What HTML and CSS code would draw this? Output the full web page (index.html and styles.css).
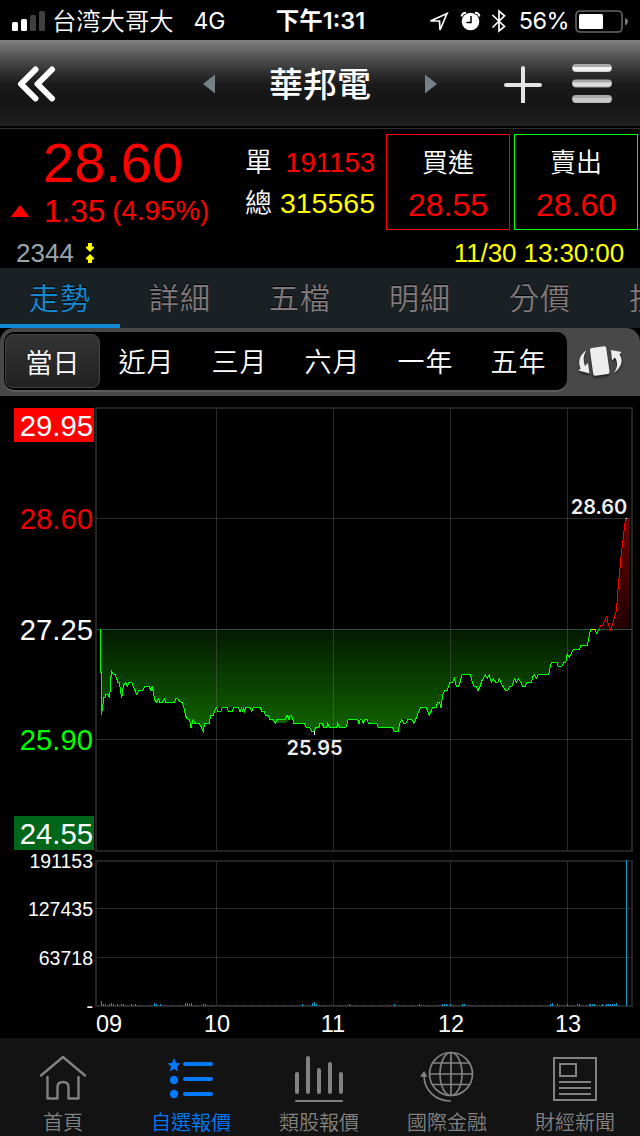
FILE: index.html
```html
<!DOCTYPE html>
<html lang="zh-Hant">
<head>
    <meta charset="UTF-8">
    <meta name="viewport" content="width=device-width, initial-scale=1.0">
    <title>華邦電</title>
    <link rel="stylesheet" href="styles.css">
</head>
<body>
    <div class="status-bar">
        <div class="carrier">
            <svg width="34" height="22" viewBox="0 0 34 22">
                <rect x="0" y="12" width="6" height="9" rx="1.5" fill="#fff"/>
                <rect x="9" y="9" width="6" height="12" rx="1.5" fill="#fff"/>
                <rect x="18" y="5" width="6" height="16" rx="1.5" fill="#404040"/>
                <rect x="27" y="1" width="6" height="20" rx="1.5" fill="#404040"/>
            </svg>
            <span class="carrier-name">台湾大哥大</span>
            <span class="network">4G</span>
        </div>
        <div class="clock">下午1:31</div>
        <div class="indicators">
            <svg width="88" height="26" viewBox="430 7 88 26">
                <path d="M449 12.5L432.500 20H441.500L442 29Z" fill="none" stroke="#fff" stroke-width="1.7" stroke-linejoin="miter"/>
                <circle cx="472.500" cy="20.500" r="8.800" fill="#fff"/>
                <path d="M463.500 15.500Q464 12 468 11.800M481.500 15.500Q481 12 477 11.800" fill="none" stroke="#fff" stroke-width="2"/>
                <path d="M473 15V21.500H468.500" fill="none" stroke="#000" stroke-width="1.500"/>
                <path d="M494.500 14L506.500 25.500L501 30V10L506.500 14.800L494.500 26.500" fill="none" stroke="#fff" stroke-width="1.700"/>
            </svg>
            <span class="battery-text">56%</span>
            <svg width="54" height="24" viewBox="0 0 54 24">
                <rect x="1" y="2" width="46" height="21" rx="4" fill="none" stroke="#666" stroke-width="1.600"/>
                <rect x="4" y="5" width="24" height="15" rx="1.500" fill="#fff"/>
                <path d="M50 9Q53 10 53 12.500T50 16.500Z" fill="#777"/>
            </svg>
        </div>
    </div>

    <div class="nav-bar">
        <svg class="nav-back" width="40" height="40" viewBox="0 0 40 40">
            <path d="M18.500 5.500L4 20L18.500 34.500M35 5.500L20.500 20L35 34.500" fill="none" stroke="#fff" stroke-width="6" stroke-linecap="round" stroke-linejoin="round"/>
        </svg>
        <div class="stock-switch">
            <svg width="12" height="20" viewBox="0 0 12 20"><path d="M12 0.500V19.500L0 10Z" fill="#768087"/></svg>
            <h1>華邦電</h1>
            <svg width="12" height="20" viewBox="0 0 12 20"><path d="M0 0.500V19.500L12 10Z" fill="#768087"/></svg>
        </div>
        <svg class="nav-add" width="38" height="38" viewBox="0 0 38 38">
            <path d="M19 3V37M2 20H36" stroke="#e4e4e4" stroke-width="4" stroke-linecap="round"/>
        </svg>
        <svg class="nav-menu" width="40" height="40" viewBox="0 0 40 40">
            <g fill="#aaa">
                <rect y="0" width="40" height="8" rx="4"/>
                <rect y="15.500" width="40" height="8" rx="4"/>
                <rect y="31" width="40" height="8" rx="4"/>
            </g>
            <path d="M0.500 3H39.500Q39 7.500 36 7.500H4Q1 7.500 .5 3Z" fill="#f2f2f2"/>
            <path d="M0.500 18.500H39.500Q39 22.500 36 22.500H4Q1 22.500 .5 18.500Z" fill="#dedede"/>
            <path d="M0.500 34H39.500Q39 38.500 36 38.500H4Q1 38.500 .5 34Z" fill="#c8c8c8"/>
        </svg>
    </div>

    <div class="quote">
        <div class="quote-main">
            <div class="price">28.60</div>
            <div class="change">
                <svg width="20" height="12" viewBox="0 0 20 12"><path d="M10 0L19.500 12H.5Z" fill="#f00"/></svg>
                <span class="change-value">1.35</span>
                <span class="change-percent">(4.95%)</span>
            </div>
        </div>
        <dl class="volume">
            <dt>單</dt>
            <dd class="single">191153</dd>
            <dt>總</dt>
            <dd class="total">315565</dd>
        </dl>
        <div class="order buy">
            <span class="order-name">買進</span>
            <span class="order-price">28.55</span>
        </div>
        <div class="order sell">
            <span class="order-name">賣出</span>
            <span class="order-price">28.60</span>
        </div>
    </div>
    <div class="quote-info">
        <span class="code">2344</span>
        <svg width="10" height="20" viewBox="0 0 10 20">
            <path d="M3 0H7V3.500H9V5L5 9L1 5V3.500H3ZM3 20H7V16.500H9V15L5 11L1 15V16.500H3Z" fill="#ff0"/>
        </svg>
        <span class="quote-time">11/30 13:30:00</span>
    </div>

    <div class="tabs">
        <div class="tab active">走勢</div>
        <div class="tab">詳細</div>
        <div class="tab">五檔</div>
        <div class="tab">明細</div>
        <div class="tab">分價</div>
        <div class="tab">技術</div>
    </div>

    <div class="range-bar">
        <div class="ranges">
            <div class="range selected">當日</div>
            <div class="range">近月</div>
            <div class="range">三月</div>
            <div class="range">六月</div>
            <div class="range">一年</div>
            <div class="range">五年</div>
        </div>
        <svg class="rotate" width="46" height="34" viewBox="0 0 46 34">
            <g fill="#ededed">
                <rect x="14.500" y="3" width="16.500" height="28" rx="2" transform="rotate(-8 22.500 17)"/>
                <path d="M9.500 6.500C3 10 0.500 18 3.500 24.500L1.500 26.500L12.500 29.500L11 19L8 22C6 17 6 11 9.500 6.500Z"/>
                <path d="M36.500 29C44.500 24 46.500 16 42.500 10.500L44.500 8L34 6L35 16.500L38 13.500C41 18 41 24 36.500 29Z"/>
            </g>
        </svg>
    </div>

    <svg class="chart" width="640" height="642" viewBox="0 396 640 642">
        <defs>
            <linearGradient id="down" gradientUnits="userSpaceOnUse" x1="0" y1="629" x2="0" y2="735">
                <stop offset="0" stop-color="#031a00"/>
                <stop offset="1" stop-color="#116600"/>
            </linearGradient>
            <linearGradient id="up" gradientUnits="userSpaceOnUse" x1="0" y1="518" x2="0" y2="629">
                <stop offset="0" stop-color="#6c0000"/>
                <stop offset="1" stop-color="#200000"/>
            </linearGradient>
        </defs>

        <g class="area">
            <path fill="url(#down)" d="M100 629V672L101.300 673V715L103.700 698L106 694L109.300 698L111.300 671L115.300 675L118 682L119.700 683L121.700 698L123.700 685L125.700 682L127.300 686L129 682H131.700L136.700 694.500L138.700 690H142.700L144.700 686.500H149L151 690L152.300 686.500L154.700 700L156.700 702.500H174.300L177 698.500L182 702.500L185.300 715L187 718.500L189.700 720L191.300 727L193.300 719.500L195 723.500H199L203.300 731.500L204.700 723.500H209.300L210.700 715.500L213.300 715L216.700 707.500H260L265.700 715L270 719.500L275.300 723H285.300L290 719.500H292L294 723.500H304.300L306.300 727.500H311.700L313.700 731.500L318 727L320 723.500L324 727.500H346L348 720L349.300 719.500H368L370 723H376.700L378.300 727.500H392.300L394.300 731.500H398.300L401.700 719.500H411.700L413.700 723L421 707.500H426L429.300 715.500L432.700 707.500L436 707L438 702.500L441 707.500L442.700 694.500L444.700 690.500L447 690L450 682.500L454.300 678.500L456.300 686.500L458.300 686L462.300 674.500H470.300L474.300 686.500L478 690.500L485.300 674.500L489.300 675L491.300 682.500L499.300 678.500L505.700 690.500L511.700 686L514.700 678.500L518.300 678.500L523 686.500L531.300 682.500L534.300 674.500H548.700L551.300 662.500H556.700L558.300 666.500L565.700 662L567.300 654L573.300 649.500H579.300L581 645.500H587.300L590.300 629Z"/>
            <path fill="url(#up)" d="M599 629L602 625L606.700 616L610.300 629L614.300 617L616.300 610L625.500 518H629V629Z"/>
        </g>

        <g class="grid">
            <path d="M216.500 408V851M333.500 408V851M450.500 408V851M567.500 408V851"/>
            <path d="M216.500 861V1006M333.500 861V1006M450.500 861V1006M567.500 861V1006"/>
            <path d="M97 518.500H631M97 739.500H631M97 908.500H631M97 957.500H631"/>
        </g>
        <g class="frame">
            <rect x="96" y="408" width="536" height="443"/>
            <rect x="96" y="861" width="536" height="145"/>
        </g>
        <path class="baseline" d="M96 629.500H632"/>

        <g class="line">
            <path class="down" d="M100.500 629V672L101.500 673V715L102.700 706L103.700 698L105.300 696.500L106 694.500H108L109.300 698L110.300 690L111.300 671L113.300 674.500H115.300L118 682.500H119.500L120.300 690L121.700 698L122.700 690L123.700 685L125.700 682.500L127.300 686.500L129 682.500H131.700L133.300 686.500L136.700 694.500L138.700 690.500H142.700L144.700 686.500H149L151 690.500L152.300 686.500L154.700 700L156.700 702.500L158.300 698.500L160 702.500H162.300L164.300 698.500L166 702.500H174.300L176 698.500H177.700L179.300 701L182 702.500L184 707.500L185.300 715L187 718.500L189.700 720L190.700 727H191.300L193.300 719.500L195 723.500H199L201 727L203.300 731.500L204.700 723.500H209.300L210.700 715.500H213.300L215 710L216.700 707.500L217.700 711.500H220.700L222.300 707.500H227L228.700 711.500H232L233.700 707.500H238.300L240 711.500L241.700 707.500L242.700 711.500L243.500 707.500L244.500 711.500L245.700 707.500H250L251.700 711.500L253.300 707.500H260L262 711.500H264L265.700 715.500H268.300L270 719.500H273.300L275.300 723.500L277 719.500H285.300L286.700 715.500H287.700L289 719.500L290.300 715.500H291.700L294 723.500H304.300L306.300 727.500H309.700L311.700 731.500H313.700L315.700 727.500H318.700L320 723.500H322.300L323.700 727.500H326.700L327.700 723.500L329.300 727.500H336.700L337.700 723.500L339.300 727.500H346L348 720L349.300 719.500H357.700L359 723.500L360.300 719.500H361.700L363.300 723.500L364.700 719.500H367L368.700 723.500H376.700L378.300 727.500H392.300L394.300 731.500H398.300L399.700 723.500L401.700 719.500L403.700 723.500H405.700L407.700 719.500H411.700L413.700 723.500L416 718.500L418.300 712L421 707.500H426L429.300 715.500L432.700 707.500H436L437.700 702.500H439.700L441 707.500L442.700 694.500L444.700 690.500H447L450 682.500H452.500L454.300 678.500L456.300 686.500H458.300L460 682.500L461.300 677L462.300 674.500H470.300L472.300 682.500L474.300 686.500H476.300L478 690.500L480 686.500L482 680.500L485.300 674.500L487.300 678.500L489.300 675L491.300 682.500L493.300 678.500L495.700 682.500H497.700L499.300 678.500L501.700 684.500L505.700 690.500H507.700L509.700 686.500H511.700L514.700 678.500L516.300 682.500L518.300 678.500L520.700 682.500L523 686.500H525L526.700 682.500H531.300L533 676.500L534.300 674.500L536.300 678.500L538.300 674.500H548.700L551.300 662.500H556.700L558.300 666.500H561.700L563.700 662.500H565.700L567.300 654L569.300 657.500L573.300 649.500H579.300L581 645.500H587.300L590.500 629.500M595 629.500L596.700 633.500L599 629.500"/>
            <path class="flat" d="M590.500 629.500H595"/>
            <path class="up" d="M599 629.500L600.700 625.500H602.700L604.700 620.500L606.700 616.500L608.300 624L610.500 629.500L612.300 625.500L614.300 617.500L616.500 610L618.500 584L621 557L625.500 518.500"/>
        </g>
        <path class="marker" d="M314.500 731V735M626 518.500H627"/>

        <path class="volume-floor" d="M101 1005.500H620"/>
        <g id="volumeBars" class="volume-bars"></g>

        <rect x="14" y="408" width="80" height="34" fill="#f00"/>
        <rect x="14" y="816" width="80" height="34" fill="#00661a"/>
        <g class="price-axis">
            <text x="93" y="436" fill="#fff">29.95</text>
            <text x="93" y="529" fill="#e00">28.60</text>
            <text x="93" y="640" fill="#fff">27.25</text>
            <text x="93" y="750" fill="#0f0">25.90</text>
            <text x="93" y="844" fill="#fff">24.55</text>
        </g>
        <g class="volume-axis">
            <text x="93" y="868">191153</text>
            <text x="93" y="916">127435</text>
            <text x="93" y="965">63718</text>
            <text x="93" y="1013">-</text>
        </g>
        <g class="time-axis">
            <text x="109" y="1032">09</text>
            <text x="217" y="1032">10</text>
            <text x="333" y="1032">11</text>
            <text x="451" y="1032">12</text>
            <text x="568" y="1032">13</text>
        </g>
        <g class="extremes">
            <text x="314.500" y="755">25.95</text>
            <text x="599" y="514">28.60</text>
        </g>
    </svg>

    <div class="tab-bar">
        <div class="item">
            <svg width="48" height="48" viewBox="0 0 48 48" fill="none" stroke="currentColor" stroke-width="2.400" stroke-linecap="round" stroke-linejoin="round">
                <path d="M2 21.500L24 3L46 21.500M8.500 23V44.500H18.500V33Q18.500 28 24 28T29.500 33V44.500H39.500V23"/>
            </svg>
            <span>首頁</span>
        </div>
        <div class="item current">
            <svg width="48" height="48" viewBox="0 0 48 48" fill="currentColor">
                <path d="M7 4L9 9L13.500 9.300L10 12.500L11.200 17.500L7 14.700L2.800 17.500L4 12.500L.5 9.300L5 9Z"/>
                <circle cx="7" cy="26" r="4.200"/>
                <circle cx="7" cy="40" r="4.200"/>
                <path d="M18 10H44M18 25H44M18 40H44" stroke="currentColor" stroke-width="4" stroke-linecap="round"/>
            </svg>
            <span>自選報價</span>
        </div>
        <div class="item">
            <svg width="50" height="48" viewBox="0 0 50 48" fill="none" stroke="currentColor" stroke-linecap="round">
                <path d="M3 20V38M14 4V38M25 16V38M36 10V38M47 20V38" stroke-width="4"/>
                <path d="M2 47H48" stroke-width="2"/>
            </svg>
            <span>類股報價</span>
        </div>
        <div class="item">
            <svg width="54" height="52" viewBox="0 0 54 52" fill="none" stroke="currentColor" stroke-width="1.700">
                <circle cx="31" cy="24" r="21.500"/>
                <ellipse cx="31" cy="24" rx="11" ry="21.500"/>
                <path d="M31 2.500V45.500M9.500 24H52.500M13 13H49M13 34.500H49"/>
                <path d="M4 25C4 40 15 51 31 51"/>
                <path d="M4 22.500L1.500 26H6Z" fill="currentColor"/>
            </svg>
            <span>國際金融</span>
        </div>
        <div class="item">
            <svg width="46" height="46" viewBox="0 0 46 46" fill="none" stroke="currentColor" stroke-width="2">
                <rect x="2" y="2" width="42" height="42"/>
                <rect x="8" y="8" width="16" height="12"/>
                <path d="M7 26H39M7 32H39M7 38H39"/>
            </svg>
            <span>財經新聞</span>
        </div>
    </div>

    <script>
        // [x, height] of the minute bars that rise above the floor
        const bars = [
            [101, 5], [103, 2], [105, 2], [109, 2], [111, 3], [113, 2], [117, 2], [121, 2], [123, 2],
            [131, 2], [135, 2], [154, 3], [156, 2], [160, 2], [185, 3], [187, 3], [189, 2], [191, 3],
            [203, 2], [205, 2], [302, 2], [312, 3], [314, 4], [316, 2], [349, 2], [394, 2], [419, 2],
            [442, 2], [444, 2], [446, 2], [450, 2], [462, 2], [464, 2], [550, 2], [552, 3], [557, 2],
            [567, 2], [577, 2], [579, 2], [589, 2], [590, 2], [592, 2], [594, 2], [602, 2], [606, 2],
            [608, 2], [610, 2], [612, 2], [614, 2], [616, 3], [626, 146]
        ];

        document.getElementById('volumeBars').innerHTML = bars.map(([x, height]) =>
            `<rect x="${x}" y="${1006 - height}" width="1" height="${height}"/>`
        ).join('');
    </script>
</body>
</html>
```
FILE: styles.css
```css
* {
    box-sizing: border-box;
}
body {
    margin: 0;
    width: 640px;
    height: 1136px;
    overflow: hidden;
    background-color: #000;
    color: #fff;
    font-family: "Liberation Sans", "Noto Sans CJK TC", sans-serif;
}
svg {
    display: block;
    flex: none;
}
.status-bar {
    display: grid;
    grid-template-columns: 1fr auto 1fr;
    align-items: center;
    height: 40px;
    padding: 0 11px 0 12px;
    font-family: Inter, "Noto Sans CJK TC", sans-serif;
    font-size: 24px;
    line-height: 42px;
}
.carrier,
.indicators {
    display: flex;
    align-items: center;
}
.carrier-name {
    margin-left: 6px;
    font-size: 24.3px;
    font-weight: 350;
}
.network {
    margin-left: 20px;
    font-size: 23px;
}
.clock {
    font-weight: 600;
    font-size: 23.5px;
}
.indicators {
    justify-content: flex-end;
}
.battery-text {
    margin: 0 6px 0 3px;
    font-size: 23.5px;
    letter-spacing: -0.6px;
}
.nav-bar {
    display: flex;
    align-items: center;
    height: 89px;
    padding: 0 28px 0 17px;
    border-bottom: 1px solid #303030;
    background: linear-gradient(#7f7f7f 0, #606060 12px, #303030 32px, #191919 46px, #151515 65px, #202020 86px, #000 86px);
}
.stock-switch {
    display: flex;
    align-items: center;
    justify-content: space-between;
    width: 234px;
    margin-left: 146px;
}
.stock-switch h1 {
    margin: 0;
    padding-top: 2px;
    font-size: 34px;
    font-weight: 500;
    line-height: 86px;
}
.nav-add {
    margin-left: 67px;
}
.nav-menu {
    margin-left: auto;
}
.quote {
    display: flex;
    height: 109px;
    padding: 5px 2px 0 10px;
}
.quote-main {
    width: 236px;
    color: #f00;
}
.price {
    padding: 1px 0 0 33px;
    font-size: 56px;
    line-height: 56px;
}
.change {
    display: flex;
    align-items: center;
    line-height: 40px;
}
.change-value {
    margin-left: 14px;
    font-size: 31.5px;
}
.change-percent {
    margin-left: 7px;
    font-size: 27.7px;
}
.volume {
    display: grid;
    grid-template-columns: 27px 1fr;
    grid-auto-rows: 41px;
    width: 130px;
    margin: 8px 11px 0 -1px;
    font-size: 28.5px;
    line-height: 41px;
}
.volume dt {
    font-size: 27px;
    font-weight: 350;
    line-height: 42px;
}
.volume dd {
    margin: 0;
    text-align: right;
}
.volume .single {
    color: #f00;
    font-size: 27.5px;
}
.volume .total {
    color: #ff0;
}
.order {
    display: flex;
    flex-direction: column;
    align-items: center;
    width: 124px;
    height: 96px;
    padding-top: 7px;
    border: 1px solid #f00;
}
.sell {
    margin-left: 4px;
    border-color: #0f0;
}
.order-name {
    font-size: 26px;
    font-weight: 350;
    line-height: 42px;
}
.order-price {
    color: #f00;
    font-size: 32px;
    line-height: 42px;
}
.quote-info {
    display: flex;
    align-items: center;
    height: 30px;
    font-size: 26px;
    line-height: 28px;
    padding: 0 16px;
}
.code {
    margin-right: 11px;
    color: #9aa5ab;
}
.quote-time {
    margin-left: auto;
    color: #ff0;
    letter-spacing: -0.1px;
}
.tabs {
    display: flex;
    height: 60px;
    overflow: hidden;
    background-color: #1a2124;
}
.tab {
    flex: none;
    width: 120px;
    color: #80787a;
    font-size: 30px;
    font-weight: 350;
    letter-spacing: 1px;
    line-height: 62px;
    text-align: center;
    text-shadow: 0 -1px #000;
}
.tab.active {
    border-bottom: 4px solid #148ad6;
    color: #148ad6;
}
.range-bar {
    display: flex;
    align-items: center;
    height: 68px;
    padding: 0 0 2px 4px;
    border-radius: 14px 14px 0 0;
    background-color: #484848;
}
.ranges {
    display: flex;
    align-items: center;
    width: 563px;
    height: 58px;
    padding: 0 2px 0 1px;
    border-radius: 10px;
    background-color: #000;
    box-shadow: 0 2px #5c5c5c;
}
.range {
    flex: 1;
    height: 54px;
    font-size: 27px;
    font-weight: 350;
    letter-spacing: 1px;
    line-height: 58px;
    text-align: center;
}
.range.selected {
    border: 1px solid #444;
    border-radius: 8px;
    background: linear-gradient(#343434, #212121);
    letter-spacing: 0;
    line-height: 59px;
}
.rotate {
    margin-left: 10px;
    filter: drop-shadow(0 2px 1px #222);
}
.grid,
.frame,
.baseline,
.line,
.marker,
.volume-floor,
.volume-bars {
    fill: none;
    shape-rendering: crispEdges;
}
.grid {
    stroke: rgba(130, 130, 130, 0.32);
}
.frame {
    stroke: #242424;
    stroke-width: 2;
}
.baseline {
    stroke: #285048;
}
.down {
    stroke: #0f0;
}
.flat {
    stroke: #ff0;
}
.up {
    stroke: #f00;
}
.marker {
    stroke: #fff;
}
.volume-floor {
    stroke: #1b6078;
    stroke-dasharray: 1 1;
}
.volume-bars {
    fill: #0b9bcb;
}
.price-axis,
.volume-axis {
    text-anchor: end;
}
.price-axis {
    font-size: 29.3px;
}
.volume-axis {
    fill: #fff;
    font-size: 19.5px;
}
.time-axis {
    fill: #fff;
    font-size: 23.5px;
    text-anchor: middle;
}
.extremes {
    fill: #eee;
    font-family: Inter, sans-serif;
    font-size: 20px;
    font-weight: 600;
    text-anchor: middle;
}
.tab-bar {
    display: flex;
    height: 98px;
    padding-right: 1px;
    background-color: #131313;
    color: #828282;
}
.item {
    display: flex;
    flex: none;
    flex-direction: column;
    align-items: center;
    justify-content: flex-end;
    width: 128px;
    margin-left: -1px;
    margin-right: 1px;
    font-size: 20px;
    font-weight: 350;
    line-height: 26px;
}
.item svg {
    margin: auto 0 8px;
}
.item.current {
    color: #007aff;
}
```
